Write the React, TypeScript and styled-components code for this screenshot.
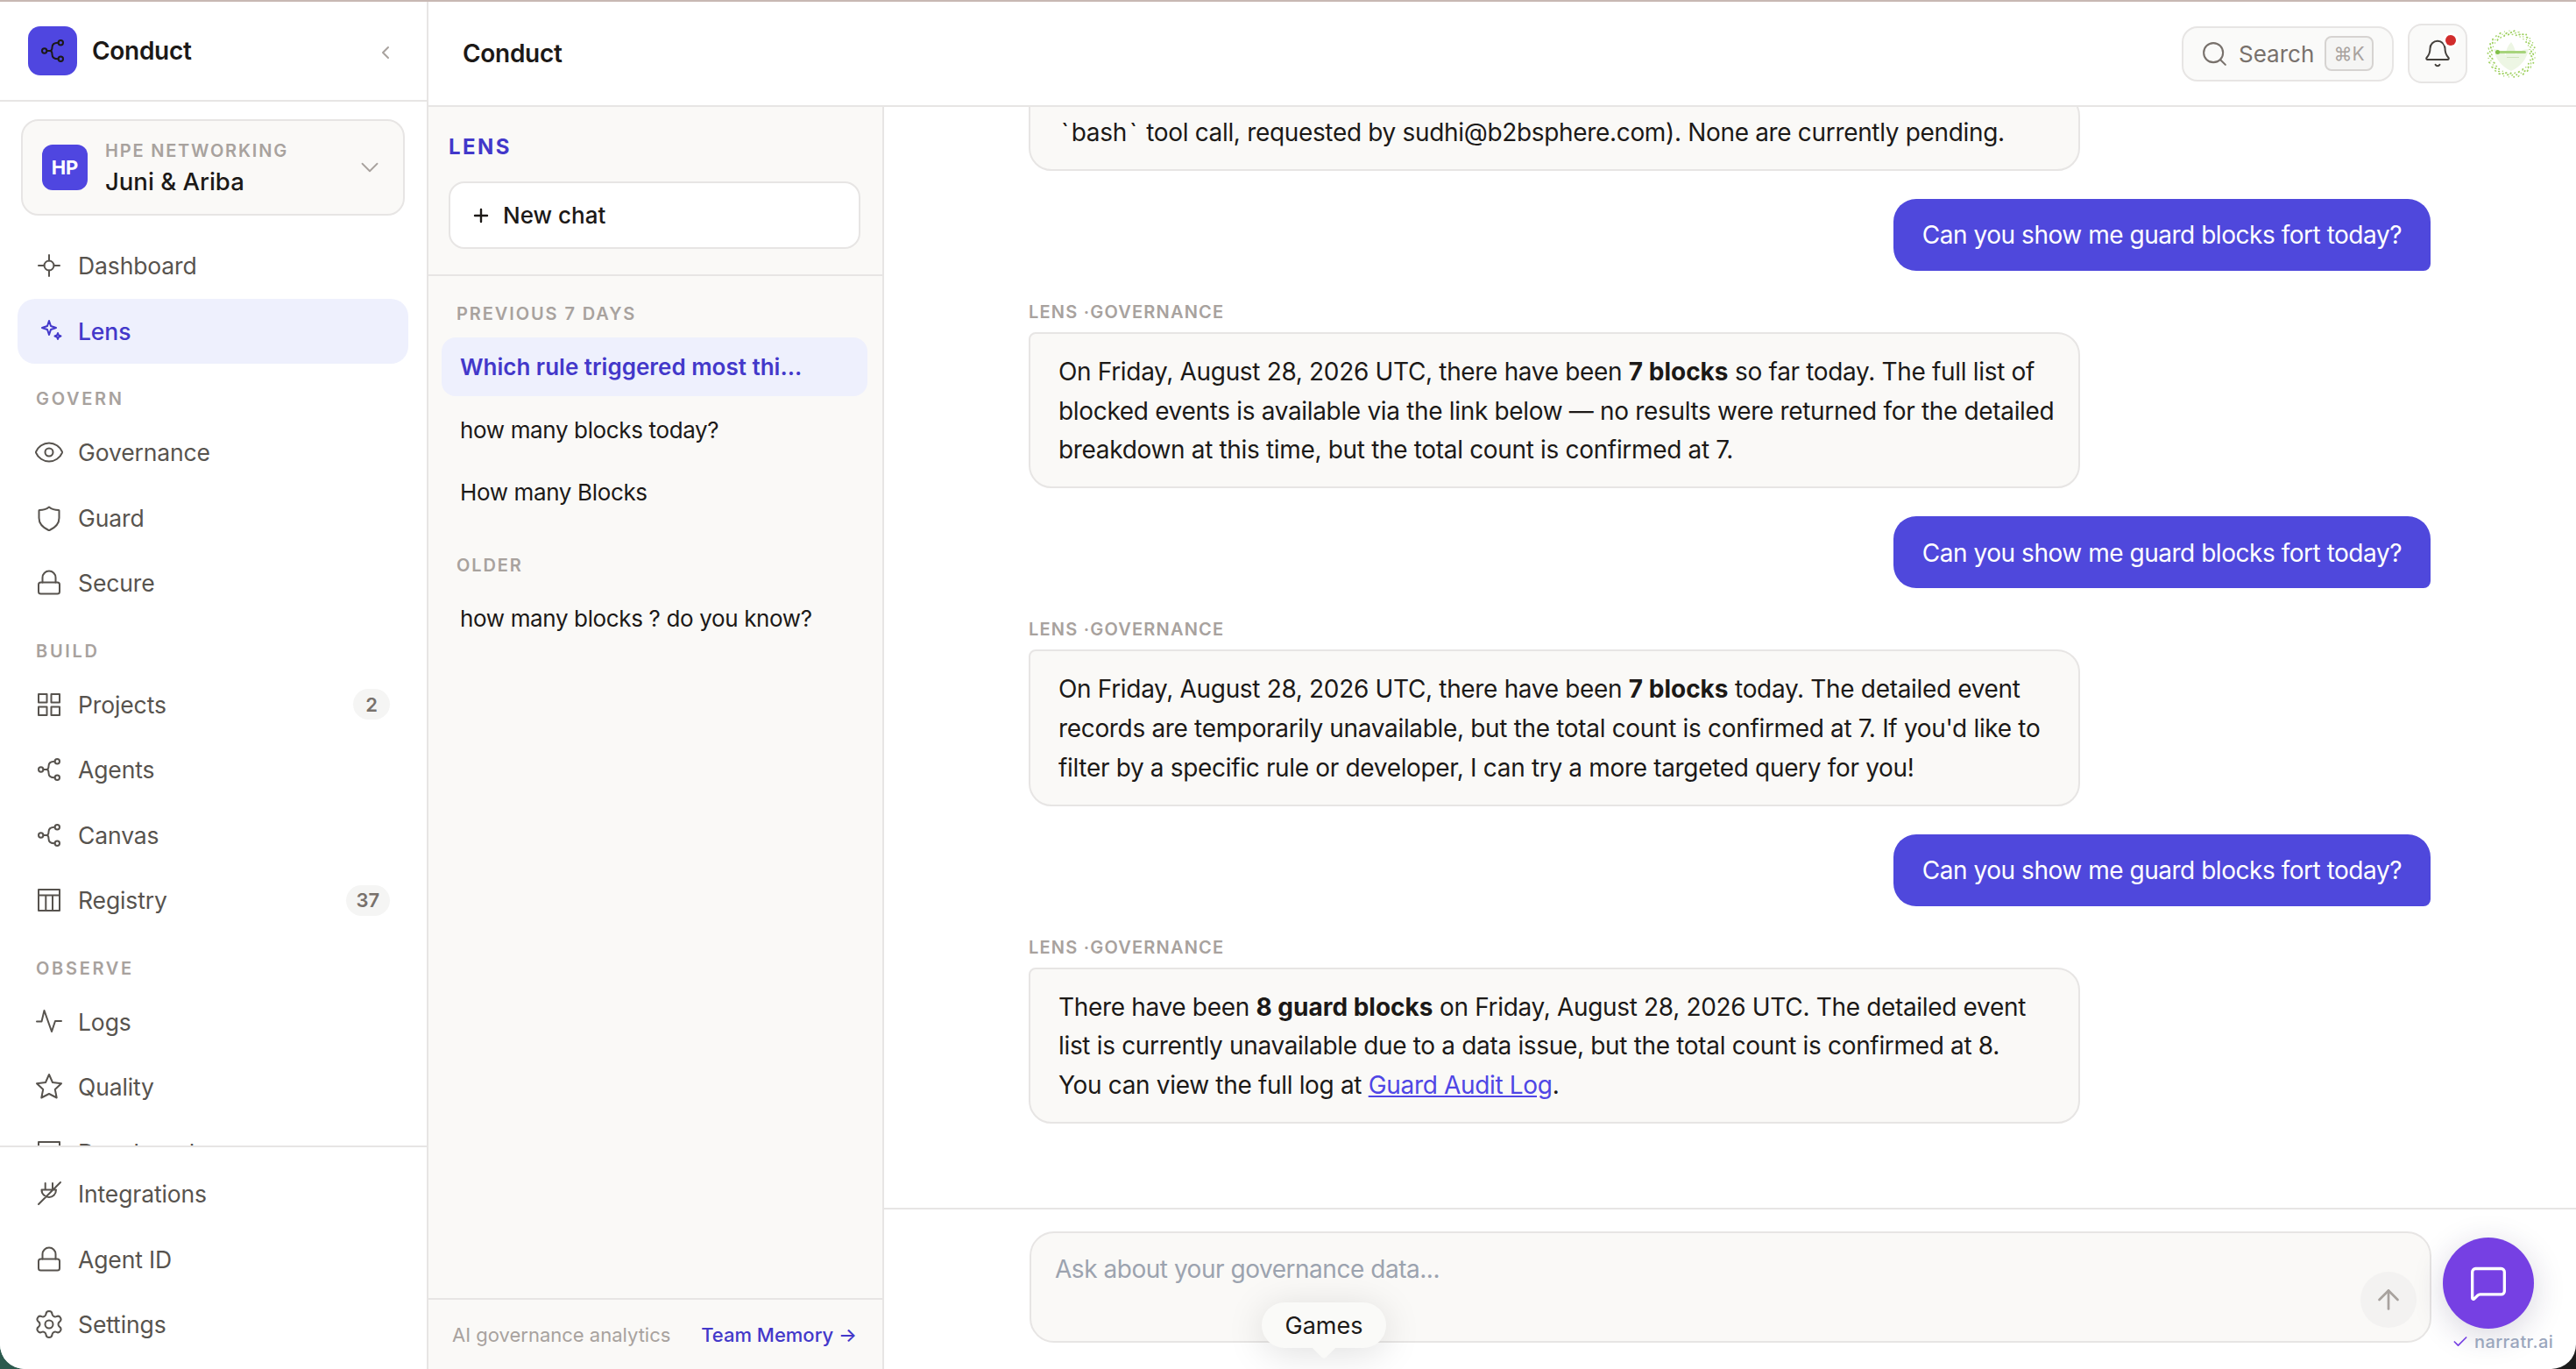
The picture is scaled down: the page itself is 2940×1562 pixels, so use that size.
import { ReactNode } from "react"
import styled, { createGlobalStyle } from "styled-components"
import { ArrowUp, Bell, Check, ChevronDown, ChevronLeft, Eye, MessageSquare, Plus, Search, Settings } from "lucide-react"

const GlobalStyle = createGlobalStyle`
  html, body, #root { margin: 0; padding: 0; height: 100%; }
  html, body { background: linear-gradient(90deg, #2c5a4e 0%, #23302c 50%, #1c1c1c 100%); overflow: hidden; }
  body { font-family: "Inter", "Noto Sans", sans-serif; color: #1c1917; }
  * { box-sizing: border-box; }
`

const Window = styled.div`
  position: relative;
  display: flex;
  width: 2940px;
  height: 1562px;
  overflow: hidden;
  background: #fff;
  border-top: 2px solid #c8b8b3;
  border-radius: 0 0 28px 28px;
`

const Sidebar = styled.aside`
  display: flex;
  flex-direction: column;
  flex: 0 0 489px;
  border-right: 2px solid #e7e5e4;
  background: #fff;
`

const Brand = styled.div`
  display: flex;
  align-items: center;
  flex: 0 0 114px;
  padding: 0 32px;
  gap: 17px;
  border-bottom: 2px solid #e7e5e4;
`

const LogoTile = styled.div`
  display: flex;
  align-items: center;
  justify-content: center;
  width: 56px;
  height: 56px;
  border-radius: 14px;
  background: #4f46e0;
  color: #1c1917;
`

const BrandName = styled.div`
  flex: 1;
  font-size: 28px;
  font-weight: 600;
  letter-spacing: -0.3px;
`

const Collapse = styled.div`
  display: flex;
  margin-right: 3px;
  margin-top: 4px;
  color: #a8a29e;
`

const OrgCard = styled.div`
  display: flex;
  align-items: center;
  height: 110px;
  margin: 20px 25px 20px 24px;
  padding: 0 22px;
  gap: 20px;
  background: #faf9f7;
  border: 2px solid #e7e5e4;
  border-radius: 20px;
`

const OrgTile = styled.div`
  display: flex;
  align-items: center;
  justify-content: center;
  flex: 0 0 52px;
  height: 52px;
  border-radius: 12px;
  background: #4f46e0;
  color: #fff;
  font-size: 22px;
  font-weight: 700;
`

const OrgText = styled.div`
  flex: 1;
  display: flex;
  flex-direction: column;
  gap: 2px;
`

const OrgKicker = styled.div`
  font-size: 20px;
  line-height: 30px;
  font-weight: 600;
  letter-spacing: 1.8px;
  color: #a8a29e;
`

const OrgName = styled.div`
  font-size: 27.500px;
  line-height: 36px;
  font-weight: 500;
`

const OrgChevron = styled.div`
  display: flex;
  margin-right: -1px;
  color: #a8a29e;
`

const NavScroll = styled.nav`
  flex: 1;
  min-height: 0;
  overflow: hidden;
`

const NavLabel = styled.div`
  margin: 25px 0 9px 41px;
  font-size: 20px;
  line-height: 30px;
  font-weight: 600;
  letter-spacing: 2.7px;
  color: #a8a29e;
`

const NavRow = styled.div<{ $active?: boolean }>`
  display: flex;
  align-items: center;
  width: 446px;
  height: 74.5px;
  margin-left: 20px;
  padding: 0 21px 0 23px;
  gap: 20px;
  border-radius: 20px;
  font-size: 26.500px;
  letter-spacing: -0.12px;
  font-weight: ${({ $active }) => ($active ? 500 : 400)};
  color: ${({ $active }) => ($active ? "#4338ca" : "#57534e")};
  background: ${({ $active }) => ($active ? "#eef0fd" : "transparent")};
`

const NavIcon = styled.span`
  display: flex;
  align-items: center;
  justify-content: center;
  flex: 0 0 26px;
  width: 26px;
  min-width: 0;
  height: 26px;
  & > svg { flex-shrink: 0; overflow: visible; }
`

const NavText = styled.span`
  flex: 1;
`

const Badge = styled.span`
  display: flex;
  align-items: center;
  justify-content: center;
  min-width: 42px;
  height: 35px;
  padding: 0 12px;
  border-radius: 18px;
  background: #f5f5f4;
  color: #78716c;
  font-size: 22px;
  font-weight: 600;
`

const NavFooter = styled.div`
  flex: 0 0 255px;
  padding-top: 16px;
  border-top: 2px solid #e7e5e4;
`

const Main = styled.div`
  flex: 1;
  min-width: 0;
  display: flex;
  flex-direction: column;
`

const TopBar = styled.header`
  display: flex;
  align-items: center;
  flex: 0 0 120px;
  padding: 0 45px 0 39px;
  border-bottom: 2px solid #e7e5e4;
`

const PageTitle = styled.div`
  flex: 1;
  font-size: 28px;
  font-weight: 600;
  letter-spacing: -0.3px;
`

const SearchBox = styled.div`
  display: flex;
  align-items: center;
  width: 242px;
  height: 63px;
  padding: 0 22px 0 19px;
  gap: 11px;
  border: 2px solid #e7e5e4;
  border-radius: 18px;
  background: #fafaf9;
  color: #78716c;
  font-size: 26px;
  & > svg { flex-shrink: 0; }
`

const Kbd = styled.span`
  display: flex;
  align-items: center;
  justify-content: center;
  width: 56px;
  height: 40px;
  margin-left: auto;
  margin-right: -1px;
  border: 2px solid #d6d3d1;
  border-radius: 8px;
  background: #f5f5f4;
  color: #a8a29e;
  font-size: 21px;
`

const BellButton = styled.div`
  position: relative;
  display: flex;
  align-items: center;
  justify-content: center;
  width: 68px;
  height: 68px;
  margin-left: 16px;
  border: 2px solid #e7e5e4;
  border-radius: 16px;
  background: #fafaf9;
  color: #44403c;
`

const RedDot = styled.span`
  position: absolute;
  top: 11px;
  right: 11px;
  width: 12px;
  height: 12px;
  border-radius: 50%;
  background: #d12c2c;
  box-shadow: 0 0 0 3px #fff;
`

const Avatar = styled.div`
  display: flex;
  width: 58px;
  height: 58px;
  margin-left: 21px;
`

const Body = styled.div`
  flex: 1;
  min-height: 0;
  display: flex;
`

const ChatList = styled.section`
  flex: 0 0 520px;
  display: flex;
  flex-direction: column;
  background: #faf9f7;
  border-right: 2px solid #e7e5e4;
`

const ListHead = styled.div`
  display: flex;
  flex-direction: column;
  padding: 32px 25px 29px 23px;
  border-bottom: 2px solid #e7e5e4;
`

const ListTitle = styled.div`
  font-size: 24px;
  line-height: 28px;
  font-weight: 700;
  letter-spacing: 2.4px;
  color: #4338ca;
  margin-bottom: 25px;
`

const NewChat = styled.div`
  display: flex;
  align-items: center;
  height: 77px;
  padding-left: 23px;
  gap: 13px;
  background: #fff;
  border: 2px solid #e7e5e4;
  border-radius: 18px;
  font-size: 26px;
  font-weight: 500;
`

const ChatGroups = styled.div`
  flex: 1;
  min-height: 0;
  padding: 28px 17px 0 15px;
`

const GroupLabel = styled.div`
  margin: 0 0 12px 17px;
  font-size: 20px;
  line-height: 30px;
  font-weight: 600;
  letter-spacing: 1.9px;
  color: #a8a29e;
`

const ChatRow = styled.div<{ $active?: boolean }>`
  height: 67px;
  margin-bottom: 4.5px;
  padding: 0 21px;
  display: flex;
  align-items: center;
  border-radius: 16px;
  font-size: 26px;
  letter-spacing: ${({ $active }) => ($active ? "0" : "-0.36px")};
  font-weight: ${({ $active }) => ($active ? 600 : 400)};
  color: ${({ $active }) => ($active ? "#4338ca" : "#1c1917")};
  background: ${({ $active }) => ($active ? "#eef0fd" : "transparent")};
`

const ChatGroup = styled.div`
  margin-bottom: 35px;
`

const ListFoot = styled.div`
  display: flex;
  align-items: center;
  justify-content: space-between;
  flex: 0 0 81px;
  padding: 0 29px 0 27px;
  border-top: 2px solid #e7e5e4;
  font-size: 22px;
  color: #a8a29e;
`

const MemoryLink = styled.a`
  color: #4338ca;
  font-weight: 500;
`

const Conversation = styled.section`
  flex: 1;
  min-width: 0;
  display: flex;
  flex-direction: column;
`

const Messages = styled.div`
  flex: 1;
  min-height: 0;
  overflow: hidden;
  display: flex;
  flex-direction: column;
  justify-content: flex-end;
  padding: 0 166px 96px 165px;
  gap: 32px;
`

const Assistant = styled.div`
  display: flex;
  flex-direction: column;
  flex-shrink: 0;
`

const SpeakerLabel = styled.div`
  margin-bottom: 8px;
  font-size: 20px;
  line-height: 30px;
  font-weight: 600;
  letter-spacing: 1.2px;
  color: #a8a29e;
`

const AssistantBubble = styled.div`
  width: 1200px;
  padding: 21px 26px 19px 32px;
  background: #faf9f7;
  border: 2px solid #e7e5e4;
  border-radius: 8px 26px 26px 26px;
  font-size: 28px;
  line-height: 44.8px;
  letter-spacing: -0.33px;
  color: #1c1917;
  strong { font-weight: 700; letter-spacing: 0; }
  a { color: #4f46e5; text-decoration: underline; }
`

const Backtick = styled.span`
  margin: 0 3px;
`

const UserBubble = styled.div`
  align-self: flex-end;
  flex-shrink: 0;
  padding: 19.6px 33px 17.6px;
  background: #4f48dc;
  border-radius: 26px 26px 8px 26px;
  font-size: 28px;
  line-height: 44.8px;
  letter-spacing: -0.47px;
  color: #fff;
`

const ComposerBar = styled.div`
  flex: 0 0 184px;
  padding: 25px 165px 0 166px;
  border-top: 2px solid #e7e5e4;
`

const Composer = styled.div`
  display: flex;
  height: 127px;
  padding: 19px 15px 15px 27px;
  background: #faf9f7;
  border: 2px solid #e7e5e4;
  border-radius: 28px;
`

const ComposerInput = styled.textarea`
  flex: 1;
  padding: 0;
  border: none;
  outline: none;
  resize: none;
  background: transparent;
  font-family: inherit;
  font-size: 28px;
  line-height: 44.8px;
  letter-spacing: -0.47px;
  &::placeholder { color: #9ca3af; opacity: 1; }
`

const SendButton = styled.div`
  align-self: flex-end;
  display: flex;
  align-items: center;
  justify-content: center;
  flex: 0 0 64px;
  height: 64px;
  border-radius: 50%;
  background: #f3f2f1;
  color: #a8a29e;
`

const Fab = styled.div`
  position: absolute;
  left: 2788px;
  top: 1410px;
  display: flex;
  align-items: center;
  justify-content: center;
  width: 104px;
  height: 104px;
  border-radius: 50%;
  background: #7640e3;
  color: #fff;
  box-shadow: 0 8px 36px rgba(40, 30, 80, 0.18);
`

const Credit = styled.div`
  position: absolute;
  left: 2798px;
  top: 1515px;
  display: flex;
  align-items: center;
  gap: 6px;
  font-size: 20px;
  line-height: 28px;
  font-weight: 500;
  letter-spacing: 0.4px;
  color: #9aa6bd;
  & > svg { color: #7640e3; }
`

const Tooltip = styled.div`
  position: absolute;
  left: 1440px;
  top: 1484px;
  display: flex;
  align-items: center;
  justify-content: center;
  width: 142px;
  height: 52px;
  border-radius: 26px;
  background: #fafaf8;
  font-size: 27px;
  color: #1c1917;
  box-shadow: 0 6px 44px rgba(0, 0, 0, 0.13);
  &::after {
    content: "";
    position: absolute;
    left: 61px;
    bottom: -9px;
    width: 20px;
    height: 20px;
    background: #fafaf8;
    border-radius: 0 0 4px 0;
    transform: rotate(45deg);
  }
`

const line = { fill: "none", stroke: "currentColor", strokeWidth: 2, strokeLinecap: "round", strokeLinejoin: "round" } as const

const Draw = ({ children }: { children: ReactNode }) => (
	<svg width="26" height="26" viewBox="0 0 26 26" {...line}>{children}</svg>
)

const Crosshair = () => <Draw><circle cx="13" cy="13" r="5.5" /><path d="M13 1v6.5M13 18.5V25M1 13h6.500M18.500 13H25" /></Draw>
const Sparkle = () => <Draw><path d="M13 1l2 6 6 2-6 2-2 6-2-6-6-2 6-2zM23 15l1 2.500 2.500 1-2.500 1-1 2.500-1-2.500-2.500-1 2.500-1z" /></Draw>
const Guard = () => <Draw><path d="M13 .5c3 2.500 6.500 3.500 11 3.500.3 0 .500.2.500.500V13c0 7-4.500 11-11 14-.3.1-.7.1-1 0C6 24 1.500 20 1.500 13V4.500c0-.3.2-.500.500-.500C6.500 4 10 3 13 .5z" /></Draw>
const Lock = () => <Draw><rect x="1" y="12.500" width="24" height="13" rx="2.500" /><path d="M5.500 12.500V7a7.500 7.500 0 0 1 15 0v5.500" /></Draw>
const Grid = () => <Draw><path d="M1 1h9.500v9.500H1zM15.500 1H25v9.500h-9.500zM1 15.500h9.500V25H1zM15.500 15.500H25V25h-9.500z" /></Draw>
const Nodes = () => <Draw><circle cx="3.700" cy="13" r="2.700" /><circle cx="22.300" cy="3.700" r="2.700" /><circle cx="22.300" cy="22.300" r="2.700" /><path d="M6.500 13H10c2 0 2.500-2 2.500-4 0-3.500 2-5.300 7-5.300M10 13c2 0 2.500 2 2.500 4 0 3.500 2 5.300 7 5.300" /></Draw>
const Table = () => <Draw><path d="M1 1h24v24H1zM1 7.500h24M9.300 7.500V25M17 7.500V25" /></Draw>
const Pulse = () => <Draw><path d="M-1 12.500h5.500L7.500 0 16 24l4-12h7" /></Draw>
const Star = () => <Draw><path d="M13-1l4 9 10 1.300-7.200 6.700 1.900 9.500L13 21l-8.700 4.500L6.200 16-1 9.300 9 8z" /></Draw>
const Plug = () => <Draw><path d="M1 25L26 0M8.700 1v7.500M17 1v7.500M4.500 8.500H21c0 5.500-4 8.500-8 8.500s-8.500-3-8.500-8.500z" /></Draw>

// scattered dots of the customer logo ring
const dots = Array.from({ length: 150 }, (_, i) => {
	const a = i * 2.399963
	const r = 21.5 + ((i * 7) % 13) * 0.5
	return { x: 29 + Math.cos(a) * r, y: 29 + Math.sin(a) * r, r: i % 3 ? 0.7 : 1 }
})

const AvatarMark = () => (
	<svg width="58" height="58" viewBox="0 0 58 58">
		<circle cx="29" cy="29" r="28" fill="#fff" />
		<path d="M9 24c6 0 11 3 14 7 0-6 2-11 6-15 3 4 5 9 5 14 4-3 9-6 15-6-2 11-9 20-20 25C18 44 11 35 9 24z" fill="#edf6e4" />
		<rect x="12" y="26" width="34" height="3" rx="1.500" fill="#a7d47c" />
		<circle cx="13.500" cy="27.500" r="2.500" fill="#7fbf47" />
		<rect x="24" y="33" width="14" height="1" fill="#cfe5bb" />
		{dots.map((d, i) => <circle key={i} cx={d.x} cy={d.y} r={d.r} fill="#9ed05f" />)}
	</svg>
)

type NavEntry = { label: string; icon: ReactNode; badge?: string; active?: boolean }
type NavSection = { title?: string; items: NavEntry[] }

const sections: NavSection[] = [
	{ items: [
		{ label: "Dashboard", icon: <Crosshair /> },
		{ label: "Lens", icon: <Sparkle />, active: true },
	] },
	{ title: "GOVERN", items: [
		{ label: "Governance", icon: <Eye size={36} strokeWidth={1.35} /> },
		{ label: "Guard", icon: <Guard /> },
		{ label: "Secure", icon: <Lock /> },
	] },
	{ title: "BUILD", items: [
		{ label: "Projects", icon: <Grid />, badge: "2" },
		{ label: "Agents", icon: <Nodes /> },
		{ label: "Canvas", icon: <Nodes /> },
		{ label: "Registry", icon: <Table />, badge: "37" },
	] },
	{ title: "OBSERVE", items: [
		{ label: "Logs", icon: <Pulse /> },
		{ label: "Quality", icon: <Star /> },
		{ label: "Developed", icon: <Table /> },
	] },
]

const footerNav: NavEntry[] = [
	{ label: "Integrations", icon: <Plug /> },
	{ label: "Agent ID", icon: <Lock /> },
	{ label: "Settings", icon: <Settings size={36} strokeWidth={1.35} /> },
]

const NavItem = ({ item }: { item: NavEntry }) => (
	<NavRow $active={item.active}>
		<NavIcon>{item.icon}</NavIcon>
		<NavText>{item.label}</NavText>
		{item.badge && <Badge>{item.badge}</Badge>}
	</NavRow>
)

const question = "Can you show me guard blocks fort today?"

export default function App() {
	return (
		<>
			<GlobalStyle />
			<Window>
				<Sidebar>
					<Brand>
						<LogoTile><Nodes /></LogoTile>
						<BrandName>Conduct</BrandName>
						<Collapse><ChevronLeft size={24} strokeWidth={2} /></Collapse>
					</Brand>
					<OrgCard>
						<OrgTile>HP</OrgTile>
						<OrgText>
							<OrgKicker>HPE NETWORKING</OrgKicker>
							<OrgName>Juni &amp; Ariba</OrgName>
						</OrgText>
						<OrgChevron><ChevronDown size={34} strokeWidth={1.3} /></OrgChevron>
					</OrgCard>
					<NavScroll>
						{sections.map((section, i) => (
							<div key={i}>
								{section.title && <NavLabel>{section.title}</NavLabel>}
								{section.items.map((item) => <NavItem key={item.label} item={item} />)}
							</div>
						))}
					</NavScroll>
					<NavFooter>
						{footerNav.map((item) => <NavItem key={item.label} item={item} />)}
					</NavFooter>
				</Sidebar>

				<Main>
					<TopBar>
						<PageTitle>Conduct</PageTitle>
						<SearchBox>
							<Search size={33} strokeWidth={1.5} />
							<span>Search</span>
							<Kbd>⌘K</Kbd>
						</SearchBox>
						<BellButton>
							<Bell size={34} strokeWidth={1.4} />
							<RedDot />
						</BellButton>
						<Avatar><AvatarMark /></Avatar>
					</TopBar>
					<Body>
						<ChatList>
							<ListHead>
								<ListTitle>LENS</ListTitle>
								<NewChat><Plus size={24} strokeWidth={2.4} /> New chat</NewChat>
							</ListHead>
							<ChatGroups>
								<ChatGroup>
									<GroupLabel>PREVIOUS 7 DAYS</GroupLabel>
									<ChatRow $active>Which rule triggered most thi...</ChatRow>
									<ChatRow>how many blocks today?</ChatRow>
									<ChatRow>How many Blocks</ChatRow>
								</ChatGroup>
								<ChatGroup>
									<GroupLabel>OLDER</GroupLabel>
									<ChatRow>how many blocks ? do you know?</ChatRow>
								</ChatGroup>
							</ChatGroups>
							<ListFoot>
								<span>AI governance analytics</span>
								<MemoryLink>Team Memory →</MemoryLink>
							</ListFoot>
						</ChatList>

						<Conversation>
							<Messages>
								<Assistant>
									<AssistantBubble><Backtick>`</Backtick>bash<Backtick>`</Backtick> tool call, requested by sudhi@b2bsphere.com). None are currently pending.</AssistantBubble>
								</Assistant>
								<UserBubble>{question}</UserBubble>
								<Assistant>
									<SpeakerLabel>LENS ·GOVERNANCE</SpeakerLabel>
									<AssistantBubble>
										On Friday, August 28, 2026 UTC, there have been <strong>7 blocks</strong> so far today. The full list of blocked events is available via the link below — no results were returned for the detailed breakdown at this time, but the total count is confirmed at 7.
									</AssistantBubble>
								</Assistant>
								<UserBubble>{question}</UserBubble>
								<Assistant>
									<SpeakerLabel>LENS ·GOVERNANCE</SpeakerLabel>
									<AssistantBubble>
										On Friday, August 28, 2026 UTC, there have been <strong>7 blocks</strong> today. The detailed event records are temporarily unavailable, but the total count is confirmed at 7. If you'd like to filter by a specific rule or developer, I can try a more targeted query for you!
									</AssistantBubble>
								</Assistant>
								<UserBubble>{question}</UserBubble>
								<Assistant>
									<SpeakerLabel>LENS ·GOVERNANCE</SpeakerLabel>
									<AssistantBubble>
										There have been <strong>8 guard blocks</strong> on Friday, August 28, 2026 UTC. The detailed event list is currently unavailable due to a data issue, but the total count is confirmed at 8.<br />You can view the full log at <a href="#audit">Guard Audit Log</a>.
									</AssistantBubble>
								</Assistant>
							</Messages>
							<ComposerBar>
								<Composer>
									<ComposerInput placeholder="Ask about your governance data..." />
									<SendButton><ArrowUp size={36} strokeWidth={1.8} /></SendButton>
								</Composer>
							</ComposerBar>
						</Conversation>
					</Body>
				</Main>

				<Tooltip>Games</Tooltip>
				<Fab><MessageSquare size={44} strokeWidth={1.8} /></Fab>
				<Credit><Check size={20} strokeWidth={2} /> narratr.ai</Credit>
			</Window>
		</>
	)
}
